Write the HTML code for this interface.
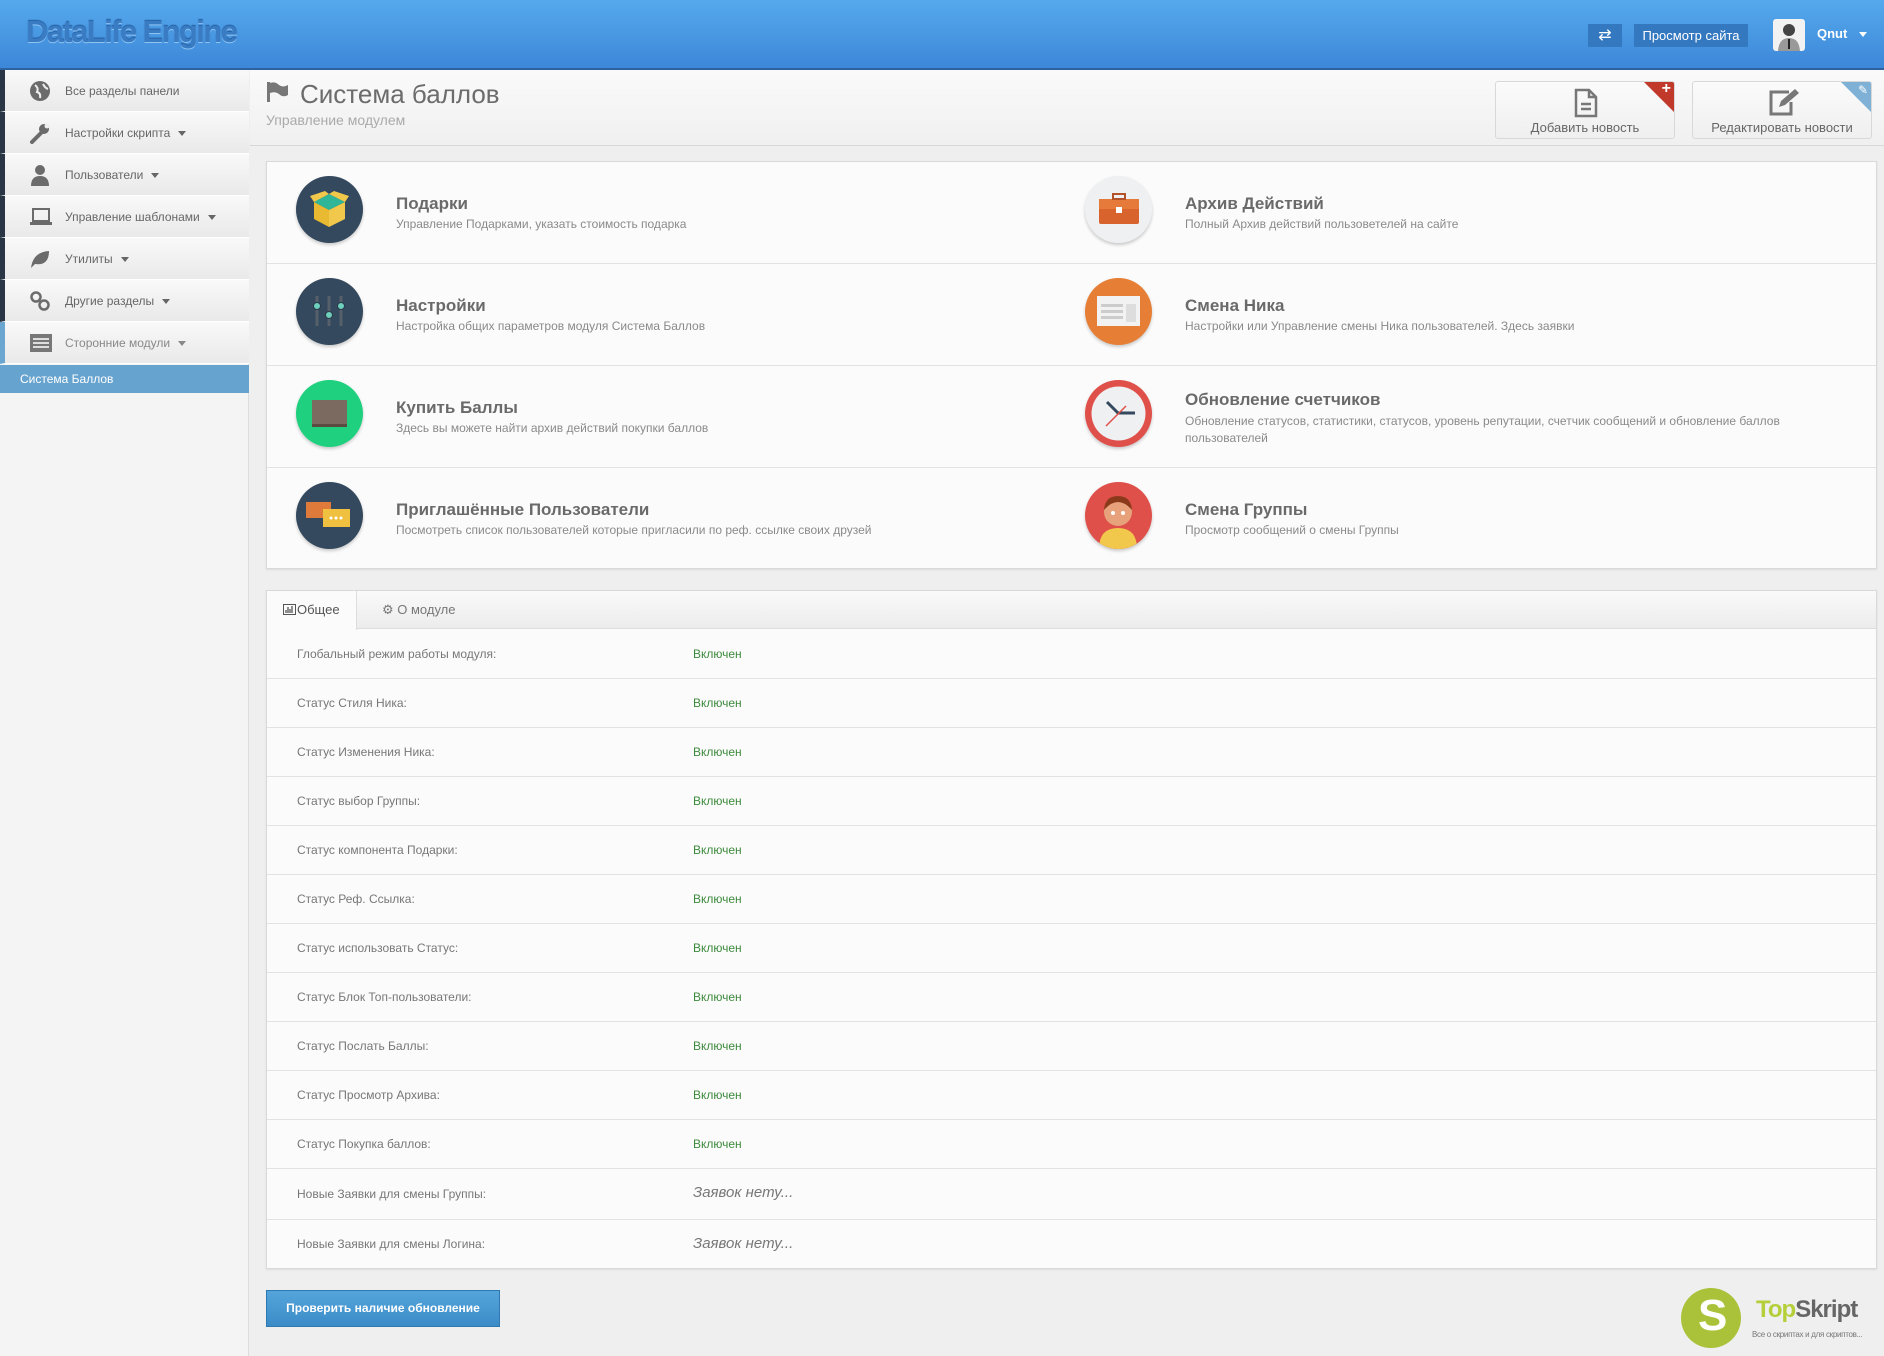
<!DOCTYPE html>
<html><head><meta charset="utf-8">
<style>
*{margin:0;padding:0;box-sizing:border-box}
body{width:1884px;height:1356px;overflow:hidden;background:#efefef;font-family:"Liberation Sans","DejaVu Sans",sans-serif;position:relative;color:#666}
.abs{position:absolute}
#hdr{left:0;top:0;width:1884px;height:70px;background:linear-gradient(#55a9ec,#3d87d9);border-bottom:2px solid #2c62a0}
#logo{left:26px;top:14px;font-size:31px;font-weight:bold;color:#3a7cc4;letter-spacing:-1.6px;text-shadow:0 1px 0 #8fc4f2,0 -1px 1px #245d9e}
.tb{background:#3478c0;color:#fff;font-size:13px;height:23px;line-height:23px;text-align:center}
#side{left:0;top:70px;width:249px;height:1286px;background:#f4f4f4;border-right:1px solid #ddd}
.si{position:absolute;left:0;width:249px;height:42px;background:linear-gradient(#f9f9f9,#e9e9e9);border-left:5px solid #2a3645;border-bottom:1px solid #fff;font-size:12px;color:#666;line-height:42px;padding-left:60px}
.si svg{position:absolute;left:24px;top:10px}
.car{display:inline-block;width:0;height:0;border-left:4px solid transparent;border-right:4px solid transparent;border-top:5px solid #666;margin-left:8px;vertical-align:middle}
#phead{left:250px;top:70px;width:1634px;height:76px;background:linear-gradient(#fafafa,#f0f0f0);border-bottom:1px solid #d8d8d8}
.qb{position:absolute;top:81px;height:58px;width:180px;background:linear-gradient(#fbfbfb,#efefef);border:1px solid #d8d8d8;border-radius:3px;text-align:center;font-size:13px;color:#666;overflow:hidden}
.qb .lab{position:absolute;left:0;right:0;top:38px}
.panel{position:absolute;left:266px;width:1611px;background:#fbfbfb;border:1px solid #d9d9d9;box-shadow:0 1px 2px rgba(0,0,0,.08)}
.row4{position:absolute;left:0;width:100%;height:102px;border-bottom:1px solid #e2e2e2}
.ic{position:absolute;width:67px;height:67px;border-radius:50%;box-shadow:0 2px 3px rgba(0,0,0,.2)}
.t{position:absolute;font-size:17px;color:#6a6a6a;font-weight:bold}
.d{position:absolute;font-size:12px;color:#8a8a8a}
.sr{position:absolute;left:0;width:100%;height:49px;border-bottom:1px solid #e2e2e2;font-size:12px;color:#777}
.sr .l{position:absolute;left:30px;top:17px}
.sr .v{position:absolute;left:426px;top:17px;color:#3d8a3d}
.sr .n{position:absolute;left:426px;top:15px;color:#777;font-style:italic;font-size:15px}
</style></head><body>
<div id="hdr" class="abs"></div>
<div id="logo" class="abs">DataLife Engine</div>
<div class="abs tb" style="left:1588px;top:24px;width:34px;font-size:16px">⇄</div>
<div class="abs tb" style="left:1634px;top:24px;width:114px">Просмотр сайта</div>
<div class="abs" style="left:1773px;top:19px;width:32px;height:32px;background:#f2f2f2;border-radius:3px;overflow:hidden">
<svg width="32" height="32"><circle cx="16" cy="11" r="6" fill="#444"/><path d="M5 32 Q6 19 16 19 Q26 19 27 32Z" fill="#999"/><rect x="15" y="20" width="2" height="10" fill="#222"/></svg></div>
<div class="abs" style="left:1817px;top:26px;color:#fff;font-weight:bold;font-size:13px">Qnut <span class="car" style="border-top-color:#fff"></span></div>

<div id="side" class="abs">
<div class="si" style="top:0">Все разделы панели<svg width="22" height="22"><circle cx="11" cy="11" r="10" fill="#6b6b6b"/><path d="M6 5 Q10 8 8 12 Q12 13 11 18 M14 4 Q16 8 19 9" stroke="#eee" stroke-width="2" fill="none"/></svg></div>
<div class="si" style="top:42px">Настройки скрипта<span class="car"></span><svg width="22" height="22"><path d="M3 20 L13 10" stroke="#6b6b6b" stroke-width="4" stroke-linecap="round"/><circle cx="15" cy="7" r="5" fill="#6b6b6b"/><circle cx="18" cy="4" r="2.5" fill="#eee"/></svg></div>
<div class="si" style="top:84px">Пользователи<span class="car"></span><svg width="22" height="22"><circle cx="11" cy="6" r="5" fill="#6b6b6b"/><path d="M2 22 Q2 12 11 12 Q20 12 20 22Z" fill="#6b6b6b"/></svg></div>
<div class="si" style="top:126px">Управление шаблонами<span class="car"></span><svg width="24" height="22"><rect x="4" y="3" width="16" height="12" fill="none" stroke="#6b6b6b" stroke-width="2"/><rect x="1" y="16" width="22" height="3" fill="#6b6b6b"/></svg></div>
<div class="si" style="top:168px">Утилиты<span class="car"></span><svg width="22" height="22"><path d="M2 20 Q4 4 20 3 Q20 18 6 16Z" fill="#6b6b6b"/></svg></div>
<div class="si" style="top:210px">Другие разделы<span class="car"></span><svg width="22" height="22"><circle cx="7" cy="7" r="4.5" fill="none" stroke="#6b6b6b" stroke-width="2.5"/><circle cx="15" cy="15" r="4.5" fill="none" stroke="#6b6b6b" stroke-width="2.5"/></svg></div>
<div class="si" style="top:252px;border-left-color:#6aa6d0;color:#888">Сторонние модули<span class="car" style="border-top-color:#888"></span><svg width="24" height="22"><rect x="1" y="2" width="22" height="18" fill="#777"/><path d="M4 7h16M4 11h16M4 15h16" stroke="#ddd" stroke-width="2"/></svg></div>
<div class="abs" style="left:0;top:295px;width:249px;height:28px;background:#67a3cf;color:#fff;font-size:12px;line-height:28px;padding-left:20px">Система Баллов</div>
</div>

<div id="phead" class="abs"></div>
<svg class="abs" style="left:267px;top:82px" width="22" height="20"><rect x="0" y="0" width="3" height="20" fill="#777"/><path d="M3 1 Q8 -1 12 3 Q16 6 21 3 L21 13 Q16 16 12 12 Q8 9 3 11Z" fill="#777"/></svg>
<div class="abs" style="left:300px;top:79px;font-size:26px;color:#6c6c6c">Система баллов</div>
<div class="abs" style="left:266px;top:112px;font-size:14px;color:#aaa">Управление модулем</div>

<div class="qb" style="left:1495px">
<svg style="position:absolute;left:77px;top:6px" width="26" height="30"><path d="M3 2h13l7 7v19H3Z M16 2v7h7" fill="none" stroke="#777" stroke-width="2.5"/><path d="M8 16h10M8 21h10" stroke="#777" stroke-width="2.5"/></svg>
<div style="position:absolute;right:0;top:0;width:0;height:0;border-top:30px solid #c0392b;border-left:30px solid transparent"></div>
<div style="position:absolute;right:3px;top:-2px;color:#fff;font-weight:bold;font-size:16px">+</div>
<div class="lab">Добавить новость</div></div>
<div class="qb" style="left:1692px">
<svg style="position:absolute;left:74px;top:5px" width="34" height="30"><path d="M22 5H4v22h20V15" fill="none" stroke="#777" stroke-width="3"/><path d="M12 20l2-6 14-12 4 4-14 12Z" fill="#777"/></svg>
<div style="position:absolute;right:0;top:0;width:0;height:0;border-top:30px solid #7fb1d6;border-left:30px solid transparent"></div>
<div style="position:absolute;right:3px;top:1px;color:#fff;font-size:12px">✎</div>
<div class="lab">Редактировать новости</div></div>

<div class="panel" style="top:161px;height:408px">
<div class="row4" style="top:0"></div><div class="row4" style="top:102px"></div><div class="row4" style="top:204px"></div><div class="row4" style="top:306px;border:0"></div>
<div class="ic" style="left:29px;top:14px;background:#34495e"><svg width="67" height="67"><path d="M18 26l15-8 16 8-16 8z" fill="#2fb597"/><path d="M18 26l15 8v17l-15-8z" fill="#e8b931"/><path d="M49 26l-16 8v17l16-8z" fill="#f1c84b"/><path d="M18 26l-4-6 15-5 4 3z M49 26l4-6-15-5-5 3z" fill="#f1c84b"/></svg></div>
<div class="t" style="left:129px;top:32px">Подарки</div><div class="d" style="left:129px;top:55px">Управление Подарками, указать стоимость подарка</div>
<div class="ic" style="left:29px;top:116px;background:#34495e"><svg width="67" height="67"><path d="M21 18v30M33 18v30M45 18v30" stroke="#56606b" stroke-width="3"/><circle cx="21" cy="28" r="3.5" fill="#6fcfbd" stroke="#2a3a48"/><circle cx="33" cy="37" r="3.5" fill="#6fcfbd" stroke="#2a3a48"/><circle cx="45" cy="28" r="3.5" fill="#6fcfbd" stroke="#2a3a48"/></svg></div>
<div class="t" style="left:129px;top:134px">Настройки</div><div class="d" style="left:129px;top:157px">Настройка общих параметров модуля Система Баллов</div>
<div class="ic" style="left:29px;top:218px;background:#1fd07e"><svg width="67" height="67"><rect x="16" y="20" width="35" height="27" fill="#7b6a60"/><rect x="16" y="44" width="35" height="3" fill="#5b4a40"/></svg></div>
<div class="t" style="left:129px;top:236px">Купить Баллы</div><div class="d" style="left:129px;top:259px">Здесь вы можете найти архив действий покупки баллов</div>
<div class="ic" style="left:29px;top:320px;background:#34495e"><svg width="67" height="67"><rect x="10" y="20" width="25" height="16" fill="#e07a3a"/><rect x="27" y="27" width="27" height="18" fill="#f0c041"/><circle cx="35" cy="36" r="1.5" fill="#fff"/><circle cx="40" cy="36" r="1.5" fill="#fff"/><circle cx="45" cy="36" r="1.5" fill="#fff"/></svg></div>
<div class="t" style="left:129px;top:338px">Приглашённые Пользователи</div><div class="d" style="left:129px;top:361px">Посмотреть список пользователей которые пригласили по реф. ссылке своих друзей</div>
<div class="ic" style="left:818px;top:14px;background:#eef0f1"><svg width="67" height="67"><rect x="14" y="23" width="40" height="25" rx="2" fill="#d9632d"/><rect x="14" y="23" width="40" height="10" fill="#e57a3b"/><rect x="28" y="18" width="12" height="5" fill="none" stroke="#b4532a" stroke-width="2"/><rect x="31" y="31" width="6" height="6" fill="#fff"/></svg></div>
<div class="t" style="left:918px;top:32px">Архив Действий</div><div class="d" style="left:918px;top:55px">Полный Архив действий пользоветелей на сайте</div>
<div class="ic" style="left:818px;top:116px;background:#e67e35"><svg width="67" height="67"><rect x="12" y="18" width="43" height="30" fill="#f2f2f2"/><rect x="16" y="26" width="22" height="3" fill="#ccc"/><rect x="16" y="32" width="22" height="3" fill="#ccc"/><rect x="16" y="38" width="22" height="3" fill="#ccc"/><rect x="41" y="26" width="10" height="18" fill="#ddd"/></svg></div>
<div class="t" style="left:918px;top:134px">Смена Ника</div><div class="d" style="left:918px;top:157px">Настройки или Управление смены Ника пользователей. Здесь заявки</div>
<div class="ic" style="left:818px;top:218px;background:#e0504a"><svg width="67" height="67"><circle cx="33.5" cy="33.5" r="27" fill="#eef0f1"/><path d="M22 22l11 11 17 0" stroke="#34495e" stroke-width="3" fill="none"/><path d="M21 46l20-20" stroke="#e0504a" stroke-width="1.5"/></svg></div>
<div class="t" style="left:918px;top:228px">Обновление счетчиков</div><div class="d" style="left:918px;top:251px;width:640px;line-height:17px">Обновление статусов, статистики, статусов, уровень репутации, счетчик сообщений и обновление баллов пользователей</div>
<div class="ic" style="left:818px;top:320px;background:#e0504a;overflow:hidden"><svg width="67" height="67"><path d="M14 67 Q14 46 33 46 Q52 46 52 67Z" fill="#f1c84b"/><circle cx="33" cy="30" r="14" fill="#e7a27c"/><path d="M19 28 Q20 14 33 14 Q46 14 47 28 Q40 20 33 20 Q26 20 19 28Z" fill="#8a3a1a"/><circle cx="28" cy="31" r="2" fill="#fff"/><circle cx="38" cy="31" r="2" fill="#fff"/></svg></div>
<div class="t" style="left:918px;top:338px">Смена Группы</div><div class="d" style="left:918px;top:361px">Просмотр сообщений о смены Группы</div>
</div>

<div class="panel" style="top:590px;height:679px">
<div style="position:absolute;left:0;top:0;width:100%;height:38px;background:linear-gradient(#fafafa,#ececec);border-bottom:1px solid #ddd"></div>
<div style="position:absolute;left:0;top:0;width:90px;height:39px;background:#fbfbfb;border-right:1px solid #ddd;font-size:13px;color:#555;line-height:38px;padding-left:30px">Общее</div>
<svg style="position:absolute;left:16px;top:13px" width="13" height="11"><rect x="0.5" y="0.5" width="12" height="10" fill="none" stroke="#555"/><path d="M3 9V6M5 9V3M7 9V5M9 9V2" stroke="#555" stroke-width="1.3"/></svg>
<div style="position:absolute;left:115px;top:0;font-size:13px;color:#777;line-height:38px">⚙ О модуле</div>
<div class="sr" style="top:39px"><span class="l">Глобальный режим работы модуля:</span><span class="v">Включен</span></div>
<div class="sr" style="top:88px"><span class="l">Статус Стиля Ника:</span><span class="v">Включен</span></div>
<div class="sr" style="top:137px"><span class="l">Статус Изменения Ника:</span><span class="v">Включен</span></div>
<div class="sr" style="top:186px"><span class="l">Статус выбор Группы:</span><span class="v">Включен</span></div>
<div class="sr" style="top:235px"><span class="l">Статус компонента Подарки:</span><span class="v">Включен</span></div>
<div class="sr" style="top:284px"><span class="l">Статус Реф. Ссылка:</span><span class="v">Включен</span></div>
<div class="sr" style="top:333px"><span class="l">Статус использовать Статус:</span><span class="v">Включен</span></div>
<div class="sr" style="top:382px"><span class="l">Статус Блок Топ-пользователи:</span><span class="v">Включен</span></div>
<div class="sr" style="top:431px"><span class="l">Статус Послать Баллы:</span><span class="v">Включен</span></div>
<div class="sr" style="top:480px"><span class="l">Статус Просмотр Архива:</span><span class="v">Включен</span></div>
<div class="sr" style="top:529px"><span class="l">Статус Покупка баллов:</span><span class="v">Включен</span></div>
<div class="sr" style="top:578px;height:51px"><span class="l" style="top:18px">Новые Заявки для смены Группы:</span><span class="n">Заявок нету...</span></div>
<div class="sr" style="top:629px;height:50px;border:0"><span class="l" style="top:17px">Новые Заявки для смены Логина:</span><span class="n">Заявок нету...</span></div>
</div>

<div class="abs" style="left:266px;top:1290px;width:234px;height:37px;background:linear-gradient(#55a5dc,#3b8bc7);border:1px solid #2f78b0;color:#fff;font-size:12px;font-weight:bold;line-height:35px;text-align:center">Проверить наличие обновление</div>

<div class="abs" style="left:1681px;top:1288px;width:60px;height:60px;border-radius:50%;background:#a9c23a"></div>
<div class="abs" style="left:1698px;top:1291px;font-size:44px;font-weight:bold;color:#fff">S</div>
<div class="abs" style="left:1756px;top:1296px;font-size:24px;font-weight:bold;color:#666;letter-spacing:-1px"><span style="color:#b4cf3a">Top</span>Skript</div>
<div class="abs" style="left:1752px;top:1330px;font-size:8px;color:#777;white-space:nowrap;letter-spacing:-0.3px">Все о скриптах и для скриптов...</div>
</body></html>
